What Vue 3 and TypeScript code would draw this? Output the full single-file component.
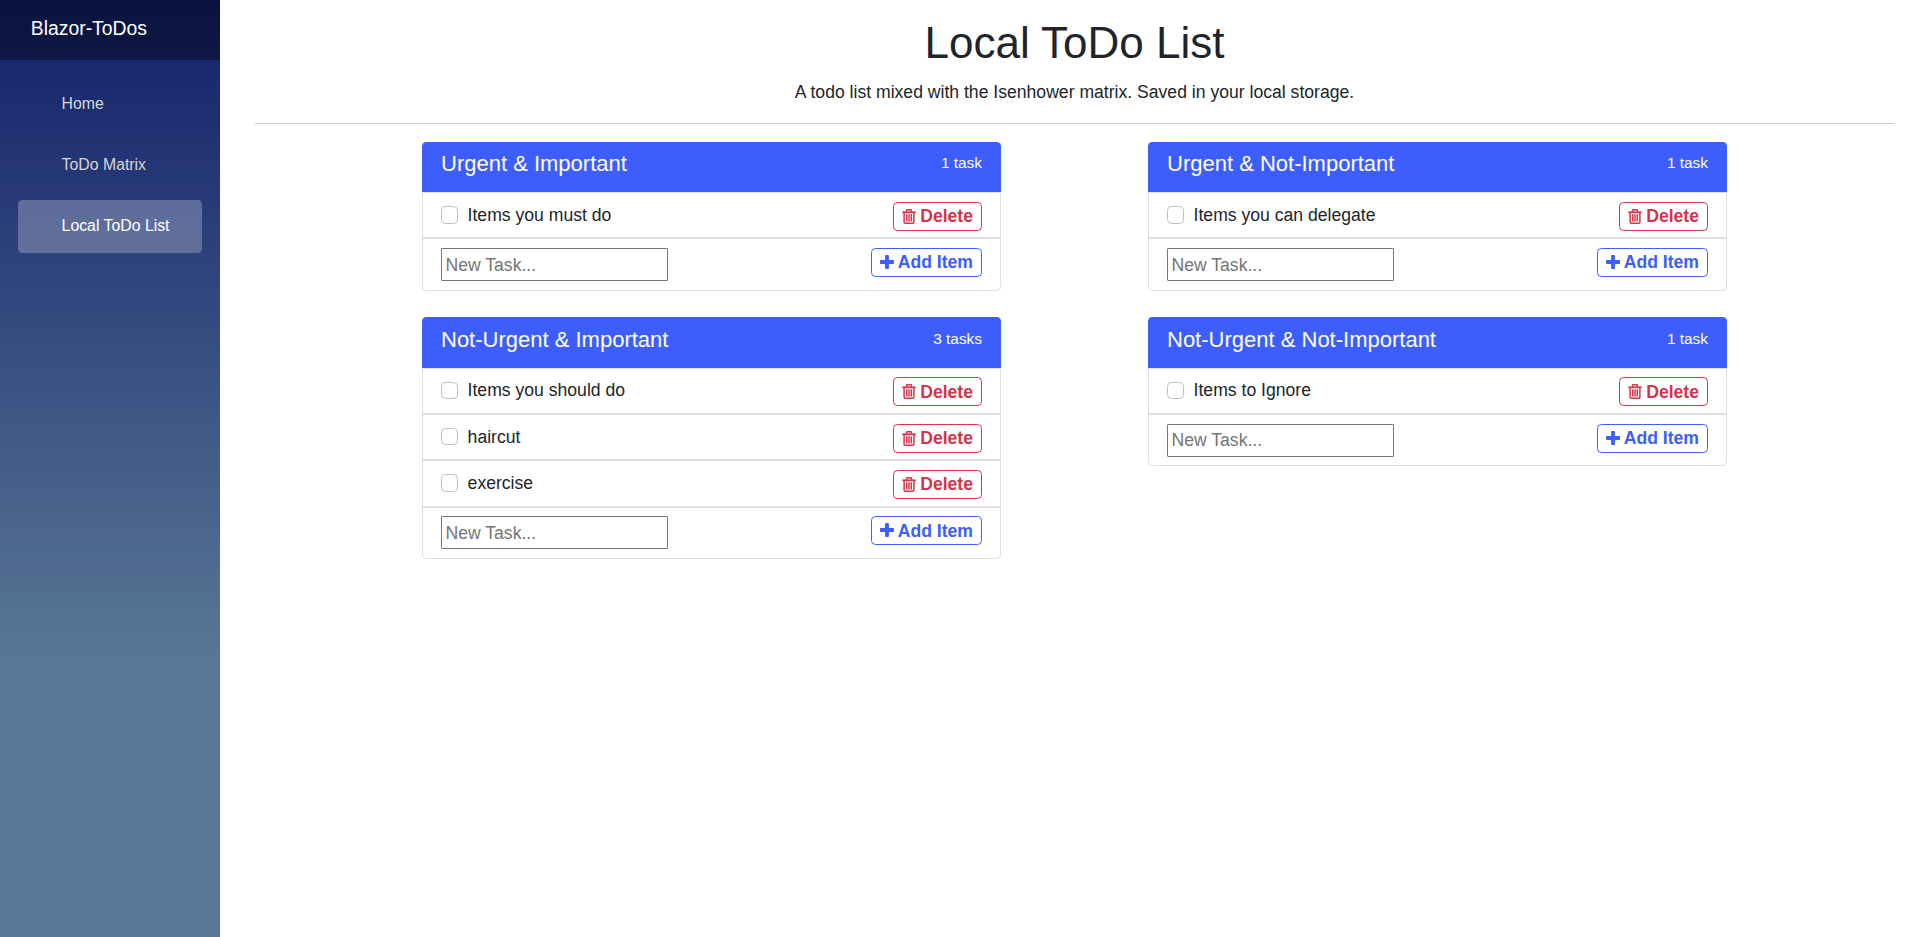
<script setup lang="ts">
import { reactive, ref } from 'vue'

interface Task {
  id: number
  text: string
  done: boolean
}

interface Quadrant {
  title: string
  draft: string
  tasks: Task[]
}

const links = ['Home', 'ToDo Matrix', 'Local ToDo List']
const active = ref('Local ToDo List')

let nextId = 0
const makeQuadrant = (title: string, items: string[]): Quadrant => ({
  title,
  draft: '',
  tasks: items.map((text) => ({ id: nextId++, text, done: false })),
})

const quadrants = reactive<Quadrant[]>([
  makeQuadrant('Urgent & Important', ['Items you must do']),
  makeQuadrant('Urgent & Not-Important', ['Items you can delegate']),
  makeQuadrant('Not-Urgent & Important', ['Items you should do', 'haircut', 'exercise']),
  makeQuadrant('Not-Urgent & Not-Important', ['Items to Ignore']),
])

function countLabel(n: number): string {
  return `${n} ${n === 1 ? 'task' : 'tasks'}`
}

function addTask(q: Quadrant): void {
  const text = q.draft.trim()
  if (!text) return
  q.tasks.push({ id: nextId++, text, done: false })
  q.draft = ''
}

function removeTask(q: Quadrant, id: number): void {
  q.tasks = q.tasks.filter((t) => t.id !== id)
}
</script>

<template>
  <div class="page">
    <aside class="sidebar">
      <div class="brand">Blazor-ToDos</div>
      <nav class="nav">
        <a
          v-for="link in links"
          :key="link"
          class="nav-link"
          :class="{ active: link === active }"
          @click="active = link"
        >{{ link }}</a>
      </nav>
    </aside>

    <main class="main">
      <h1 class="title">Local ToDo List</h1>
      <p class="lead">A todo list mixed with the Isenhower matrix. Saved in your local storage.</p>
      <hr class="rule" />
      <div class="grid">
        <section v-for="q in quadrants" :key="q.title" class="card">
          <header class="card-header">
            <h2 class="card-title">{{ q.title }}</h2>
            <span class="count">{{ countLabel(q.tasks.length) }}</span>
          </header>
          <div v-for="task in q.tasks" :key="task.id" class="row">
            <label class="task">
              <input v-model="task.done" class="check" type="checkbox" />
              <span>{{ task.text }}</span>
            </label>
            <button class="btn danger" @click="removeTask(q, task.id)">
              <svg class="icon trash" viewBox="0 0 14 15">
                <path d="M0.3 2.4H13.7V4.2H0.3Z" />
                <path
                  class="outline"
                  d="M4.3 2.8L4.9 0.8H9.1L9.7 2.8M2.1 4V13.2Q2.1 14.2 3.1 14.2H10.9Q11.9 14.2 11.9 13.2V4M4.7 5.3V12.6M7 5.3V12.6M9.3 5.3V12.6"
                />
              </svg>
              <span>Delete</span>
            </button>
          </div>
          <div class="row entry">
            <input
              v-model="q.draft"
              class="field"
              type="text"
              placeholder="New Task..."
              @keyup.enter="addTask(q)"
            />
            <button class="btn primary" @click="addTask(q)">
              <svg class="icon plus" viewBox="192 128 1408 1408">
                <path d="M1600 736v192q0 40-28 68t-68 28h-416v416q0 40-28 68t-68 28h-192q-40 0-68-28t-28-68v-416h-416q-40 0-68-28t-28-68v-192q0-40 28-68t68-28h416v-416q0-40 28-68t68-28h192q40 0 68 28t28 68v416h416q40 0 68 28t28 68z" />
              </svg>
              <span>Add Item</span>
            </button>
          </div>
        </section>
      </div>
    </main>
  </div>
</template>

<style>
html,
body {
  margin: 0;
  background: #fff;
}
</style>

<style scoped>
* {
  box-sizing: border-box;
}

.page {
  display: flex;
  height: 100vh;
  overflow: hidden;
  font-family: "Liberation Sans", Arial, sans-serif;
  font-size: 17.6px;
  line-height: 26.4px;
  color: #212529;
}

.sidebar {
  flex: none;
  width: 220px;
  background: linear-gradient(180deg, #12206a 0%, #587795 70%);
}

.brand {
  height: 60px;
  padding: 15px 0 0 30.8px;
  background: rgba(0, 0, 0, 0.4);
  color: #fff;
  font-size: 19.36px;
}

.nav {
  display: flex;
  flex-direction: column;
  gap: 8.5px;
  padding: 17.6px 18px 0;
}

.nav-link {
  height: 52.8px;
  padding-left: 43.6px;
  border-radius: 4.4px;
  color: #d7d7d7;
  font-size: 15.84px;
  line-height: 51.6px;
  cursor: pointer;
}

.nav-link.active {
  background: rgba(255, 255, 255, 0.25);
  color: #fff;
}

.main {
  flex: 1;
  padding: 16px 23px 0 35px;
}

.title {
  margin: 0 0 9.6px;
  font-size: 44px;
  font-weight: 400;
  line-height: 53px;
  text-align: center;
}

.lead {
  margin: 0;
  text-align: center;
}

.rule {
  height: 1px;
  margin: 18px 0 17.9px;
  border: 0;
  background: #c8c9ca;
}

.grid {
  display: grid;
  grid-template-columns: 579px 579px;
  justify-content: center;
  align-items: start;
  column-gap: 147px;
  row-gap: 26.63px;
}

.card {
  border: 1px solid #dfdfdf;
  border-radius: 4.4px;
}

.card-header {
  display: flex;
  justify-content: space-between;
  height: 50.2px;
  margin: -1px -1px 0;
  padding: 9.5px 19px 0;
  border-radius: 4.4px 4.4px 0 0;
  background: #3d5efd;
  color: #fff;
}

.card-title {
  margin: 0;
  font-size: 22px;
  font-weight: 400;
}

.count {
  font-size: 15.4px;
  line-height: 24px;
}

.row {
  display: flex;
  justify-content: space-between;
  align-items: flex-start;
  height: 46.3px;
  padding: 8.8px 18px 0;
  border-top: 1px solid #dfdfdf;
  border-bottom: 1px solid #dfdfdf;
}

.row.entry {
  height: 51.45px;
  border-bottom: 0;
}

.task {
  display: flex;
}

.check {
  appearance: none;
  width: 17px;
  height: 17.4px;
  margin: 4.3px 9.6px 0 0;
  border: 1px solid #bfbfbf;
  border-radius: 4.4px;
  background: #fff;
}

.check:checked {
  border-color: #3d5efd;
  background: #3d5efd;
}

.field {
  width: 227px;
  height: 33px;
  padding: 2px 3.5px 1px;
  border: 1px solid #767676;
  border-radius: 1px;
  font: inherit;
}

.field::placeholder {
  color: #757575;
}

.btn {
  display: flex;
  align-items: center;
  height: 29px;
  padding: 0 8px;
  border: 1px solid currentColor;
  border-radius: 4.4px;
  background: transparent;
  font: inherit;
  font-weight: 700;
  cursor: pointer;
}

.danger {
  color: #d63447;
}

.primary {
  color: #3d5efd;
}

.icon {
  fill: currentColor;
}

.outline {
  fill: none;
  stroke: currentColor;
  stroke-width: 1.5;
}

.trash {
  width: 14px;
  height: 15px;
  margin-right: 4.5px;
}

.plus {
  width: 14px;
  height: 14px;
  margin: -1px 3.4px 0 0;
}
</style>
